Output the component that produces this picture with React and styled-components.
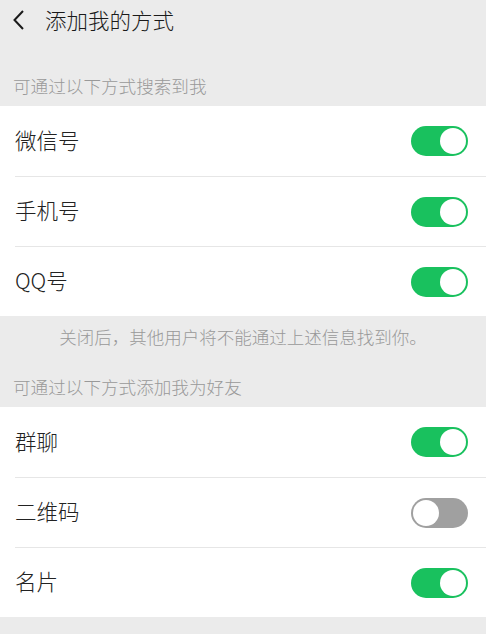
import React, { useState } from "react";
import styled, { createGlobalStyle } from "styled-components";

const Global = createGlobalStyle`
  html, body { margin: 0; padding: 0; background: #ebebeb; }
  body { font-family: "Noto Sans CJK SC", "Noto Sans", sans-serif; }
  * { box-sizing: border-box; }
`;

const Page = styled.div`
  width: 486px;
  min-height: 634px;
  background: #ebebeb;
  display: flex;
  flex-direction: column;
`;

const Header = styled.div`
  height: 40px;
  display: flex;
  align-items: center;
  padding-left: 12px;
  gap: 19px;
`;

const Title = styled.div`
  font-size: 21.5px;
  font-weight: 300;
  color: #1a1a1a;
  line-height: 1;
`;

const SectionLabel = styled.div`
  height: ${(p) => p.$h}px;
  display: flex;
  align-items: flex-end;
  padding: 0 0 ${(p) => p.$pb}px 13px;
  font-size: 17.6px;
  font-weight: 300;
  color: #999;
  line-height: 1;
`;

const List = styled.div`
  background: #fff;
  display: flex;
  flex-direction: column;
`;

const Row = styled.div`
  height: 70px;
  display: flex;
  align-items: center;
  justify-content: space-between;
  padding-right: 18px;
  margin-left: 15px;
  border-top: ${(p) => (p.$first ? "none" : "1px solid #e6e6e6")};
`;

const Label = styled.div`
  font-size: 21.5px;
  font-weight: 300;
  color: #222;
  line-height: 1;
  padding-bottom: 3px;
`;

const Track = styled.button`
  width: 57px;
  height: 30px;
  border-radius: 15px;
  border: none;
  padding: 0;
  background: ${(p) => (p.$on ? "#19c15e" : "#a0a0a0")};
  position: relative;
  cursor: pointer;
`;

const Knob = styled.span`
  position: absolute;
  top: 2px;
  left: ${(p) => (p.$on ? "29px" : "2px")};
  width: 26px;
  height: 26px;
  border-radius: 50%;
  background: #fff;
`;

const Note = styled.div`
  height: 42px;
  display: flex;
  align-items: center;
  justify-content: center;
  font-size: 17.5px;
  font-weight: 300;
  color: #999;
  padding-bottom: 2px;
`;

function Toggle({ on, onClick }) {
  return (
    <Track $on={on} onClick={onClick} aria-pressed={on}>
      <Knob $on={on} />
    </Track>
  );
}

function Section({ items, state, setState }) {
  return (
    <List>
      {items.map((it, i) => (
        <Row key={it} $first={i === 0}>
          <Label>{it}</Label>
          <Toggle
            on={state[it]}
            onClick={() => setState({ ...state, [it]: !state[it] })}
          />
        </Row>
      ))}
    </List>
  );
}

export default function App() {
  const [state, setState] = useState({
    微信号: true,
    手机号: true,
    QQ号: true,
    群聊: true,
    二维码: false,
    名片: true,
  });
  return (
    <Page>
      <Global />
      <Header>
        <svg width="14" height="22" viewBox="0 0 14 22">
          <path d="M11 2 L2.5 11 L11 20" fill="none" stroke="#1a1a1a" strokeWidth="2" />
        </svg>
        <Title>添加我的方式</Title>
      </Header>
      <SectionLabel $h={66} $pb={11}>可通过以下方式搜索到我</SectionLabel>
      <Section items={["微信号", "手机号", "QQ号"]} state={state} setState={setState} />
      <Note>关闭后，其他用户将不能通过上述信息找到你。</Note>
      <SectionLabel $h={49} $pb={11}>可通过以下方式添加我为好友</SectionLabel>
      <Section items={["群聊", "二维码", "名片"]} state={state} setState={setState} />
    </Page>
  );
}
